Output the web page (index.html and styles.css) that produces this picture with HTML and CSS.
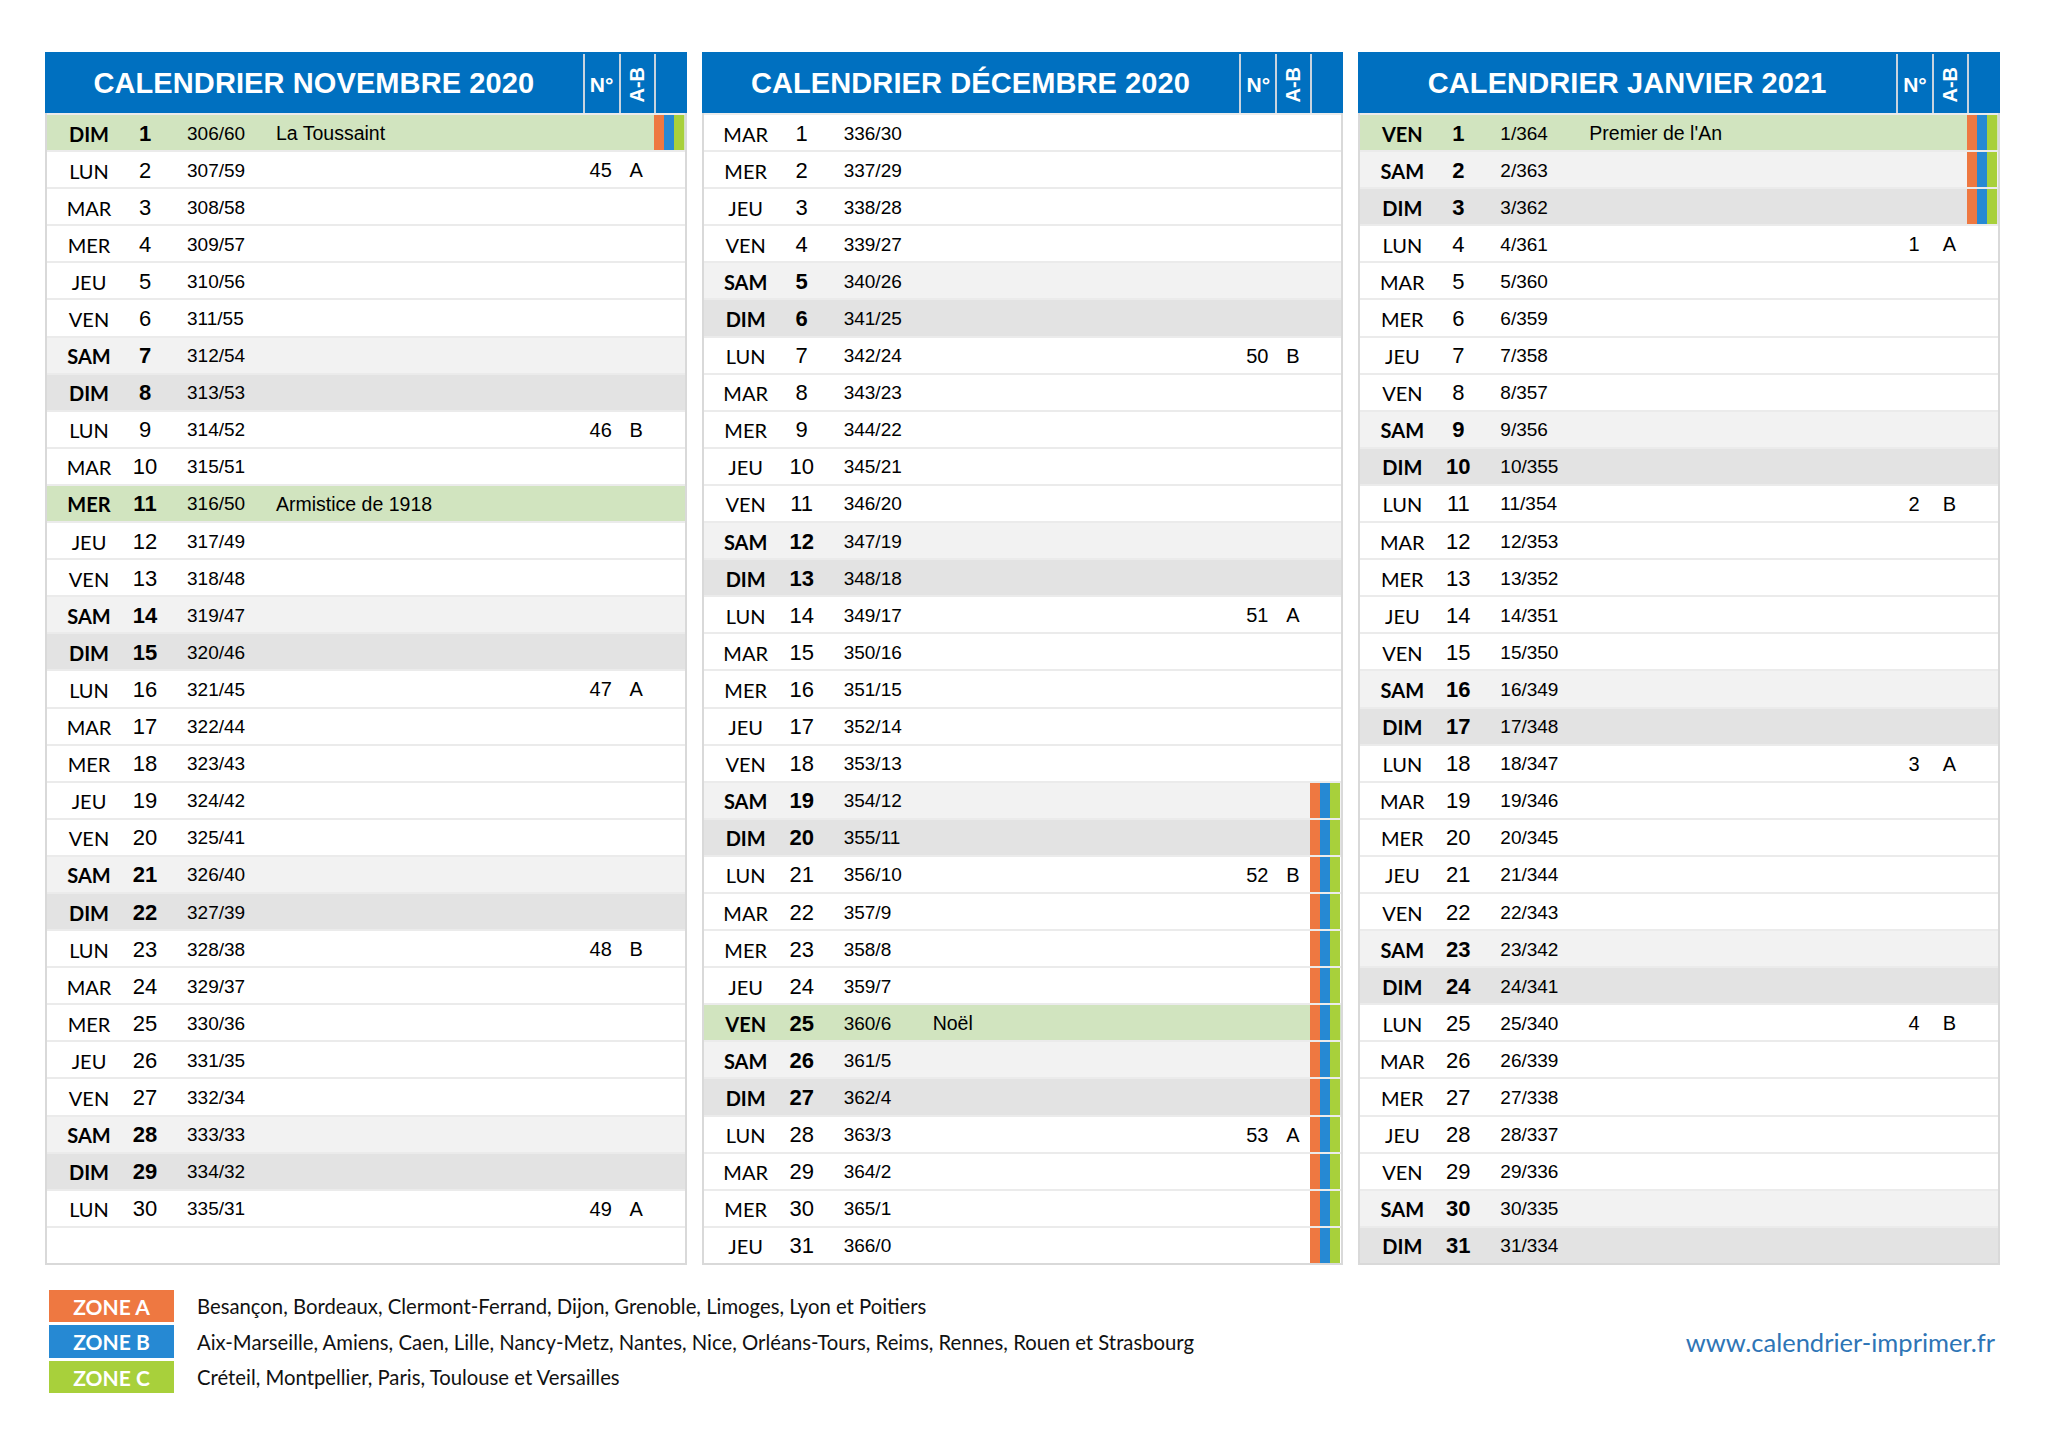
FILE: index.html
```html
<!DOCTYPE html>
<html lang="fr">
<head>
<meta charset="utf-8">
<title>Calendrier Novembre 2020 - Janvier 2021</title>
<link rel="stylesheet" href="styles.css">
</head>
<body>
<div class="page">
  <div class="months">
    <section class="month">
      <div class="hd"><div class="title">CALENDRIER NOVEMBRE 2020</div><div class="hc">N°</div><div class="hc"><span class="vert">A-B</span></div><div class="hc"></div></div>
      <div class="body">
        <div class="r di fe"><span class="d">DIM</span><span class="n">1</span><span class="f">306/60</span><span class="h">La Toussaint</span><span class="z"></span></div>
        <div class="r"><span class="d">LUN</span><span class="n">2</span><span class="f">307/59</span><span class="w">45</span><span class="ab">A</span></div>
        <div class="r"><span class="d">MAR</span><span class="n">3</span><span class="f">308/58</span></div>
        <div class="r"><span class="d">MER</span><span class="n">4</span><span class="f">309/57</span></div>
        <div class="r"><span class="d">JEU</span><span class="n">5</span><span class="f">310/56</span></div>
        <div class="r"><span class="d">VEN</span><span class="n">6</span><span class="f">311/55</span></div>
        <div class="r sa"><span class="d">SAM</span><span class="n">7</span><span class="f">312/54</span></div>
        <div class="r di"><span class="d">DIM</span><span class="n">8</span><span class="f">313/53</span></div>
        <div class="r"><span class="d">LUN</span><span class="n">9</span><span class="f">314/52</span><span class="w">46</span><span class="ab">B</span></div>
        <div class="r"><span class="d">MAR</span><span class="n">10</span><span class="f">315/51</span></div>
        <div class="r fe"><span class="d">MER</span><span class="n">11</span><span class="f">316/50</span><span class="h">Armistice de 1918</span></div>
        <div class="r"><span class="d">JEU</span><span class="n">12</span><span class="f">317/49</span></div>
        <div class="r"><span class="d">VEN</span><span class="n">13</span><span class="f">318/48</span></div>
        <div class="r sa"><span class="d">SAM</span><span class="n">14</span><span class="f">319/47</span></div>
        <div class="r di"><span class="d">DIM</span><span class="n">15</span><span class="f">320/46</span></div>
        <div class="r"><span class="d">LUN</span><span class="n">16</span><span class="f">321/45</span><span class="w">47</span><span class="ab">A</span></div>
        <div class="r"><span class="d">MAR</span><span class="n">17</span><span class="f">322/44</span></div>
        <div class="r"><span class="d">MER</span><span class="n">18</span><span class="f">323/43</span></div>
        <div class="r"><span class="d">JEU</span><span class="n">19</span><span class="f">324/42</span></div>
        <div class="r"><span class="d">VEN</span><span class="n">20</span><span class="f">325/41</span></div>
        <div class="r sa"><span class="d">SAM</span><span class="n">21</span><span class="f">326/40</span></div>
        <div class="r di"><span class="d">DIM</span><span class="n">22</span><span class="f">327/39</span></div>
        <div class="r"><span class="d">LUN</span><span class="n">23</span><span class="f">328/38</span><span class="w">48</span><span class="ab">B</span></div>
        <div class="r"><span class="d">MAR</span><span class="n">24</span><span class="f">329/37</span></div>
        <div class="r"><span class="d">MER</span><span class="n">25</span><span class="f">330/36</span></div>
        <div class="r"><span class="d">JEU</span><span class="n">26</span><span class="f">331/35</span></div>
        <div class="r"><span class="d">VEN</span><span class="n">27</span><span class="f">332/34</span></div>
        <div class="r sa"><span class="d">SAM</span><span class="n">28</span><span class="f">333/33</span></div>
        <div class="r di"><span class="d">DIM</span><span class="n">29</span><span class="f">334/32</span></div>
        <div class="r"><span class="d">LUN</span><span class="n">30</span><span class="f">335/31</span><span class="w">49</span><span class="ab">A</span></div>
        <div class="r"></div>
      </div>
    </section>

    <section class="month">
      <div class="hd"><div class="title">CALENDRIER DÉCEMBRE 2020</div><div class="hc">N°</div><div class="hc"><span class="vert">A-B</span></div><div class="hc"></div></div>
      <div class="body">
        <div class="r"><span class="d">MAR</span><span class="n">1</span><span class="f">336/30</span></div>
        <div class="r"><span class="d">MER</span><span class="n">2</span><span class="f">337/29</span></div>
        <div class="r"><span class="d">JEU</span><span class="n">3</span><span class="f">338/28</span></div>
        <div class="r"><span class="d">VEN</span><span class="n">4</span><span class="f">339/27</span></div>
        <div class="r sa"><span class="d">SAM</span><span class="n">5</span><span class="f">340/26</span></div>
        <div class="r di"><span class="d">DIM</span><span class="n">6</span><span class="f">341/25</span></div>
        <div class="r"><span class="d">LUN</span><span class="n">7</span><span class="f">342/24</span><span class="w">50</span><span class="ab">B</span></div>
        <div class="r"><span class="d">MAR</span><span class="n">8</span><span class="f">343/23</span></div>
        <div class="r"><span class="d">MER</span><span class="n">9</span><span class="f">344/22</span></div>
        <div class="r"><span class="d">JEU</span><span class="n">10</span><span class="f">345/21</span></div>
        <div class="r"><span class="d">VEN</span><span class="n">11</span><span class="f">346/20</span></div>
        <div class="r sa"><span class="d">SAM</span><span class="n">12</span><span class="f">347/19</span></div>
        <div class="r di"><span class="d">DIM</span><span class="n">13</span><span class="f">348/18</span></div>
        <div class="r"><span class="d">LUN</span><span class="n">14</span><span class="f">349/17</span><span class="w">51</span><span class="ab">A</span></div>
        <div class="r"><span class="d">MAR</span><span class="n">15</span><span class="f">350/16</span></div>
        <div class="r"><span class="d">MER</span><span class="n">16</span><span class="f">351/15</span></div>
        <div class="r"><span class="d">JEU</span><span class="n">17</span><span class="f">352/14</span></div>
        <div class="r"><span class="d">VEN</span><span class="n">18</span><span class="f">353/13</span></div>
        <div class="r sa"><span class="d">SAM</span><span class="n">19</span><span class="f">354/12</span><span class="z"></span></div>
        <div class="r di"><span class="d">DIM</span><span class="n">20</span><span class="f">355/11</span><span class="z"></span></div>
        <div class="r"><span class="d">LUN</span><span class="n">21</span><span class="f">356/10</span><span class="w">52</span><span class="ab">B</span><span class="z"></span></div>
        <div class="r"><span class="d">MAR</span><span class="n">22</span><span class="f">357/9</span><span class="z"></span></div>
        <div class="r"><span class="d">MER</span><span class="n">23</span><span class="f">358/8</span><span class="z"></span></div>
        <div class="r"><span class="d">JEU</span><span class="n">24</span><span class="f">359/7</span><span class="z"></span></div>
        <div class="r fe"><span class="d">VEN</span><span class="n">25</span><span class="f">360/6</span><span class="h">Noël</span><span class="z"></span></div>
        <div class="r sa"><span class="d">SAM</span><span class="n">26</span><span class="f">361/5</span><span class="z"></span></div>
        <div class="r di"><span class="d">DIM</span><span class="n">27</span><span class="f">362/4</span><span class="z"></span></div>
        <div class="r"><span class="d">LUN</span><span class="n">28</span><span class="f">363/3</span><span class="w">53</span><span class="ab">A</span><span class="z"></span></div>
        <div class="r"><span class="d">MAR</span><span class="n">29</span><span class="f">364/2</span><span class="z"></span></div>
        <div class="r"><span class="d">MER</span><span class="n">30</span><span class="f">365/1</span><span class="z"></span></div>
        <div class="r"><span class="d">JEU</span><span class="n">31</span><span class="f">366/0</span><span class="z"></span></div>
      </div>
    </section>

    <section class="month">
      <div class="hd"><div class="title">CALENDRIER JANVIER 2021</div><div class="hc">N°</div><div class="hc"><span class="vert">A-B</span></div><div class="hc"></div></div>
      <div class="body">
        <div class="r fe"><span class="d">VEN</span><span class="n">1</span><span class="f">1/364</span><span class="h">Premier de l'An</span><span class="z"></span></div>
        <div class="r sa"><span class="d">SAM</span><span class="n">2</span><span class="f">2/363</span><span class="z"></span></div>
        <div class="r di"><span class="d">DIM</span><span class="n">3</span><span class="f">3/362</span><span class="z"></span></div>
        <div class="r"><span class="d">LUN</span><span class="n">4</span><span class="f">4/361</span><span class="w">1</span><span class="ab">A</span></div>
        <div class="r"><span class="d">MAR</span><span class="n">5</span><span class="f">5/360</span></div>
        <div class="r"><span class="d">MER</span><span class="n">6</span><span class="f">6/359</span></div>
        <div class="r"><span class="d">JEU</span><span class="n">7</span><span class="f">7/358</span></div>
        <div class="r"><span class="d">VEN</span><span class="n">8</span><span class="f">8/357</span></div>
        <div class="r sa"><span class="d">SAM</span><span class="n">9</span><span class="f">9/356</span></div>
        <div class="r di"><span class="d">DIM</span><span class="n">10</span><span class="f">10/355</span></div>
        <div class="r"><span class="d">LUN</span><span class="n">11</span><span class="f">11/354</span><span class="w">2</span><span class="ab">B</span></div>
        <div class="r"><span class="d">MAR</span><span class="n">12</span><span class="f">12/353</span></div>
        <div class="r"><span class="d">MER</span><span class="n">13</span><span class="f">13/352</span></div>
        <div class="r"><span class="d">JEU</span><span class="n">14</span><span class="f">14/351</span></div>
        <div class="r"><span class="d">VEN</span><span class="n">15</span><span class="f">15/350</span></div>
        <div class="r sa"><span class="d">SAM</span><span class="n">16</span><span class="f">16/349</span></div>
        <div class="r di"><span class="d">DIM</span><span class="n">17</span><span class="f">17/348</span></div>
        <div class="r"><span class="d">LUN</span><span class="n">18</span><span class="f">18/347</span><span class="w">3</span><span class="ab">A</span></div>
        <div class="r"><span class="d">MAR</span><span class="n">19</span><span class="f">19/346</span></div>
        <div class="r"><span class="d">MER</span><span class="n">20</span><span class="f">20/345</span></div>
        <div class="r"><span class="d">JEU</span><span class="n">21</span><span class="f">21/344</span></div>
        <div class="r"><span class="d">VEN</span><span class="n">22</span><span class="f">22/343</span></div>
        <div class="r sa"><span class="d">SAM</span><span class="n">23</span><span class="f">23/342</span></div>
        <div class="r di"><span class="d">DIM</span><span class="n">24</span><span class="f">24/341</span></div>
        <div class="r"><span class="d">LUN</span><span class="n">25</span><span class="f">25/340</span><span class="w">4</span><span class="ab">B</span></div>
        <div class="r"><span class="d">MAR</span><span class="n">26</span><span class="f">26/339</span></div>
        <div class="r"><span class="d">MER</span><span class="n">27</span><span class="f">27/338</span></div>
        <div class="r"><span class="d">JEU</span><span class="n">28</span><span class="f">28/337</span></div>
        <div class="r"><span class="d">VEN</span><span class="n">29</span><span class="f">29/336</span></div>
        <div class="r sa"><span class="d">SAM</span><span class="n">30</span><span class="f">30/335</span></div>
        <div class="r di"><span class="d">DIM</span><span class="n">31</span><span class="f">31/334</span></div>
      </div>
    </section>
  </div>

  <div class="legend">
    <div class="zones">
      <div class="zone"><span class="tag za">ZONE A</span><span class="cities">Besançon, Bordeaux, Clermont-Ferrand, Dijon, Grenoble, Limoges, Lyon et Poitiers</span></div>
      <div class="zone"><span class="tag zb">ZONE B</span><span class="cities">Aix-Marseille, Amiens, Caen, Lille, Nancy-Metz, Nantes, Nice, Orléans-Tours, Reims, Rennes, Rouen et Strasbourg</span></div>
      <div class="zone"><span class="tag zc">ZONE C</span><span class="cities">Créteil, Montpellier, Paris, Toulouse et Versailles</span></div>
    </div>
    <div class="url">www.calendrier-imprimer.fr</div>
  </div>
</div>
</body>
</html>
```

FILE: styles.css
```css
html, body {
  margin: 0;
  padding: 0;
  background: #ffffff;
}

body {
  font-family: "Liberation Sans", Arial, sans-serif;
  color: #000000;
}

.page {
  width: 1955px;
  padding: 52px 0 0 45px;
}

.months {
  display: grid;
  grid-template-columns: repeat(3, 1fr);
  column-gap: 15px;
}

.month {
  display: flex;
  flex-direction: column;
}

.hd {
  height: 61px;
  background: #0070c0;
  color: #ffffff;
  display: grid;
  grid-template-columns: 1fr 36px 35px 33px;
}

.title {
  display: flex;
  align-items: center;
  justify-content: center;
  padding-top: 2px;
  font-weight: bold;
  font-size: 29px;
  letter-spacing: 0.1px;
}

.hc {
  border-left: 2px solid #c9d4df;
  margin-top: 2px;
  margin-bottom: -2px;
  display: flex;
  align-items: center;
  justify-content: center;
  font-weight: bold;
  font-size: 21px;
}

.vert {
  writing-mode: vertical-rl;
  transform: rotate(180deg);
  font-size: 20px;
}

.body {
  border: 2px solid #d9d9d9;
  border-top: 0;
}

.r {
  display: grid;
  grid-template-columns: 82px 32px 26px 88px 1fr 36px 35px 31px;
  align-items: center;
  height: 35.1px;
  border-top: 2px solid #ebebeb;
  font-size: 19.5px;
  background: #ffffff;
}

.r > span {
  margin-top: 2px;
}

.r.sa { background: #f2f2f2; }
.r.di { background: #e3e3e3; }
.r.fe { background: #d1e4bf; }

.d {
  grid-column: 1;
  text-align: center;
  font-family: Lato, "Open Sans", sans-serif;
  font-size: 20px;
  padding-left: 2px;
}

.n {
  grid-column: 2;
  text-align: center;
  font-size: 22px;
}

.sa .d, .sa .n, .di .d, .di .n, .fe .d, .fe .n {
  font-weight: bold;
}

.f {
  grid-column: 4;
  font-size: 19px;
}

.h {
  grid-column: 5;
  font-size: 19.5px;
  padding-left: 1px;
}

.w {
  grid-column: 6;
  text-align: center;
  font-size: 20px;
}

.ab {
  grid-column: 7;
  text-align: center;
  font-size: 20px;
}

.r > .z {
  grid-column: 8;
  align-self: stretch;
  margin: 0 1px 0 0;
  background: linear-gradient(to right, #ee7841 0 33.4%, #2689d3 33.4% 66.7%, #a8d03b 66.7% 100%);
}

.legend {
  display: flex;
  align-items: center;
  justify-content: space-between;
  margin-top: 25px;
  padding: 0 5px 0 4px;
}

.zones {
  display: flex;
  flex-direction: column;
  gap: 3px;
}

.zone {
  display: flex;
  align-items: center;
  height: 32.5px;
}

.tag {
  width: 125px;
  height: 100%;
  display: flex;
  align-items: center;
  justify-content: center;
  color: #ffffff;
  font-family: Lato, "Open Sans", sans-serif;
  font-weight: bold;
  font-size: 21px;
}

.za { background: #ee7841; }
.zb { background: #2689d3; }
.zc { background: #a8d03b; }

.cities {
  margin-left: 23px;
  font-family: Lato, "Open Sans", sans-serif;
  font-size: 20.3px;
  color: #111111;
}

.url {
  font-family: Lato, "Open Sans", sans-serif;
  font-size: 25.5px;
  color: #2e75b6;
}
```
